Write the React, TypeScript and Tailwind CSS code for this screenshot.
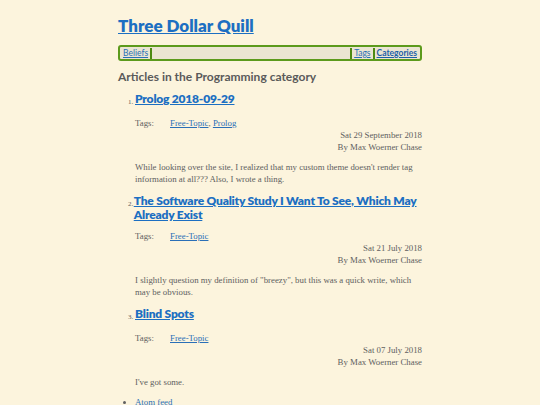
import React from 'react';

const heading = { fontFamily: 'Lato, "Open Sans", sans-serif' };
const serif = { fontFamily: '"Liberation Serif", "DejaVu Serif", serif' };

type Article = {
  title: string;
  tags: string[];
  date: string;
  summary: string;
};

const articles: Article[] = [
  {
    title: 'Prolog 2018-09-29',
    tags: ['Free-Topic', 'Prolog'],
    date: 'Sat 29 September 2018',
    summary:
      "While looking over the site, I realized that my custom theme doesn't render tag information at all??? Also, I wrote a thing.",
  },
  {
    title: 'The Software Quality Study I Want To See, Which May Already Exist',
    tags: ['Free-Topic'],
    date: 'Sat 21 July 2018',
    summary:
      'I slightly question my definition of "breezy", but this was a quick write, which may be obvious.',
  },
  {
    title: 'Blind Spots',
    tags: ['Free-Topic'],
    date: 'Sat 07 July 2018',
    summary: "I've got some.",
  },
];

export default function App() {
  return (
    <div className="min-h-[405px] bg-[#fcf4dd] text-[#606060]">
      <div className="mx-auto w-[304px] pt-[14px]">
        <h1 style={heading} className="text-[17px] font-extrabold leading-[24px]">
          <a href="#" className="text-[#1c6fc2] underline">Three Dollar Quill</a>
        </h1>
        <nav
          style={heading}
          className="mt-[7px] flex h-[16px] items-center rounded-[3px] border-2 border-[#5c9a1c] bg-[#ebe5d2] px-[1px] text-[8.5px] leading-none"
        >
          <a href="#" className="px-[2px] text-[#2a6fb7] underline">Beliefs</a>
          <span className="h-[11px] w-[2px] bg-[#4d8a12]" />
          <span className="flex-1" />
          <span className="h-[11px] w-[2px] bg-[#4d8a12]" />
          <a href="#" className="px-[2px] text-[#2a6fb7] underline">Tags</a>
          <span className="h-[11px] w-[2px] bg-[#4d8a12]" />
          <a href="#" className="px-[2px] font-bold text-[#1c5fa8] underline">Categories</a>
        </nav>
        <h2 style={heading} className="mt-[7px] text-[12px] font-bold leading-[18px] text-[#5a5a5a]">
          Articles in the Programming category
        </h2>
        <ol className="mt-[6px] pl-[17px]">
          {articles.map((a, i) => (
            <li key={a.title} className="mb-[9px] last:mb-[8px]">
              <div className="flex">
                <span style={serif} className="-ml-[7px] w-[7px] pt-[3px] text-[7px] leading-[14px]">
                  {i + 1}.
                </span>
                <h3 style={heading} className="text-[12px] font-extrabold leading-[14px] tracking-[-0.2px]">
                  <a href="#" className="text-[#1c6fc2] underline">{a.title}</a>
                </h3>
              </div>
              <div style={serif} className="mt-[8px] flex text-[8.8px] leading-[12px]">
                <span className="w-[35px]">Tags:</span>
                <span>
                  {a.tags.map((t, j) => (
                    <React.Fragment key={t}>
                      {j > 0 && ', '}
                      <a href="#" className="text-[#2a6fb7] underline">{t}</a>
                    </React.Fragment>
                  ))}
                </span>
              </div>
              <div style={serif} className="text-right text-[8.8px] leading-[12px]">
                <div>{a.date}</div>
                <div>By Max Woerner Chase</div>
              </div>
              <p style={serif} className="mt-[8px] text-[8.8px] leading-[12px]">{a.summary}</p>
            </li>
          ))}
        </ol>
        <ul style={serif} className="list-disc pl-[17px] text-[8.8px] leading-[12px]">
          <li>
            <a href="#" className="text-[#2a6fb7]">Atom feed</a>
          </li>
        </ul>
      </div>
    </div>
  );
}
